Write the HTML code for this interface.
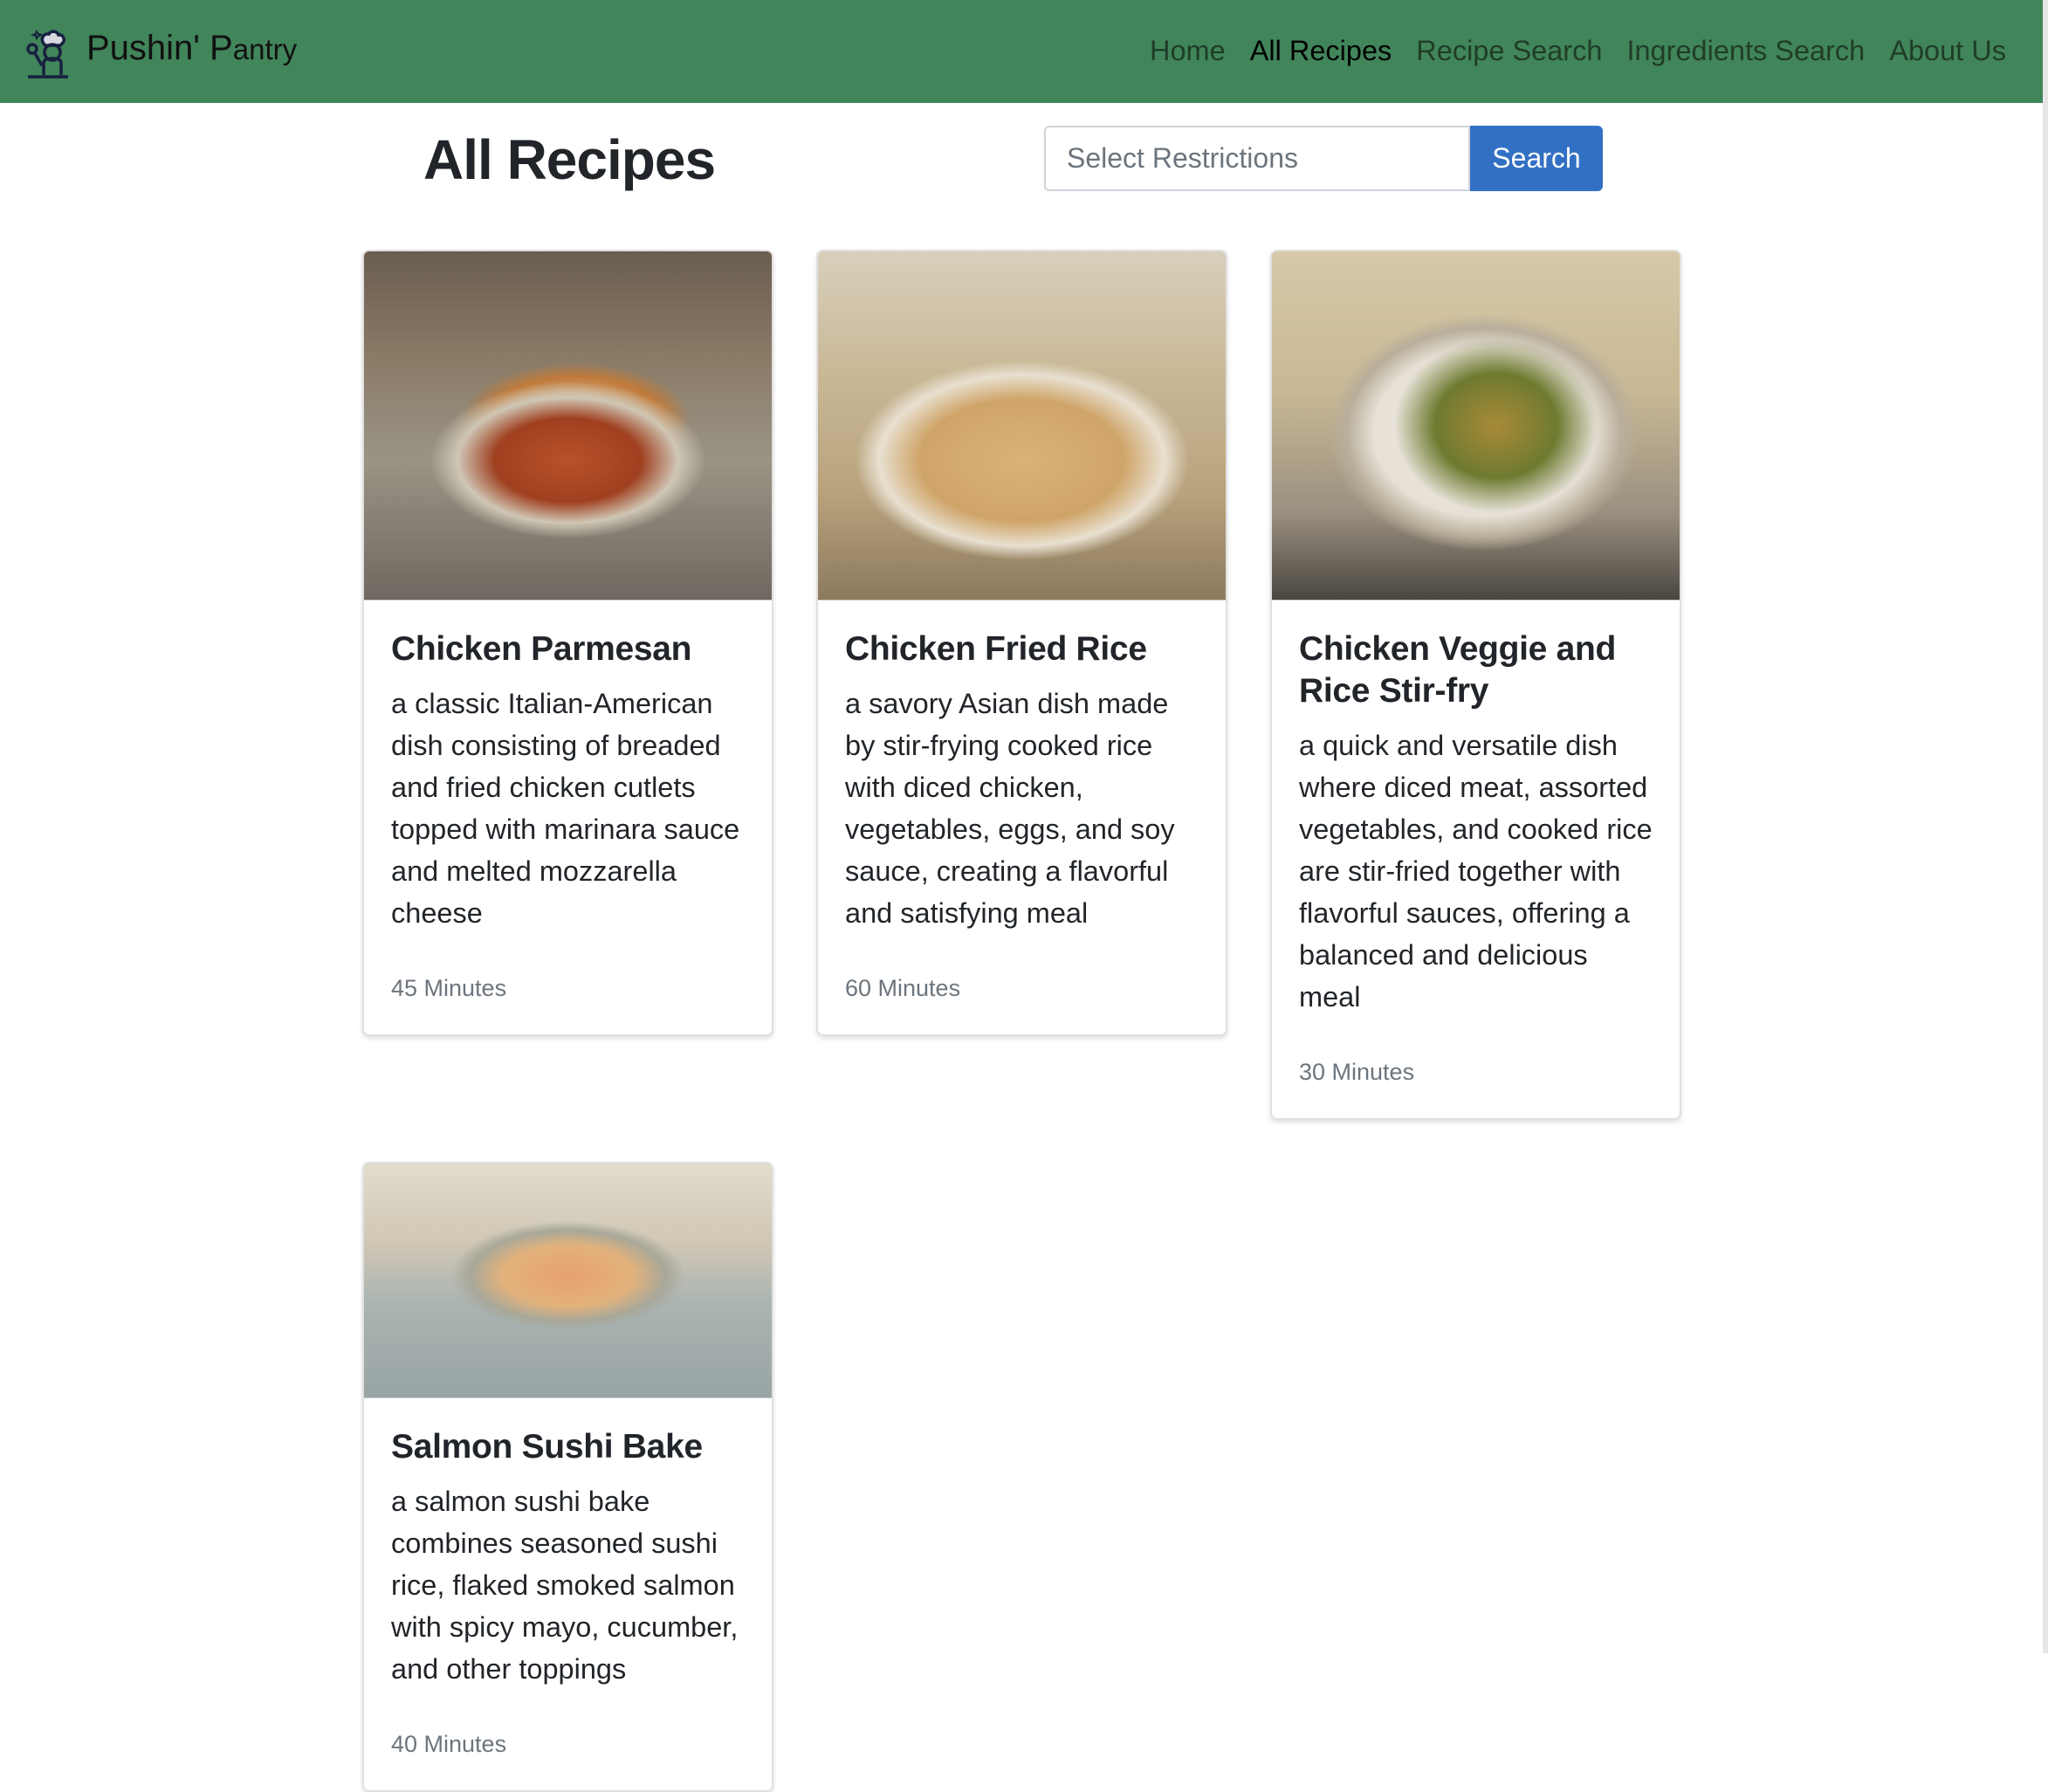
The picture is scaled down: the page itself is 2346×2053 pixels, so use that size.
<!DOCTYPE html>
<html><head><meta charset="utf-8"><style>
*{box-sizing:border-box;margin:0;padding:0}
body{width:2346px;height:1894px;background:#fff;font-family:"Liberation Sans",Arial,sans-serif;color:#212529;position:relative;overflow:hidden}
.strip{position:absolute;left:2340px;top:0;width:6px;height:1894px;background:#e6e6e6}
.nav{position:absolute;left:0;top:0;width:2340px;height:118px;background:#41855a}
.brand{position:absolute;left:99px;top:33px;font-size:40px;color:#111}
.brand small{font-size:33px}
.links{position:absolute;top:40px;left:1317px;font-size:32.5px;color:#1f3d28;white-space:nowrap}
.links span{margin-right:28px}
.links .act{color:#000}
h1{position:absolute;left:485px;top:146px;font-size:64px;font-weight:bold;letter-spacing:-1px}
.inp{position:absolute;left:1196px;top:144px;width:488px;height:75px;border:2px solid #ced4da;border-radius:6px 0 0 6px;font-size:32px;color:#6c757d;padding:17px 24px}
.btn{position:absolute;left:1684px;top:144px;width:152px;height:75px;background:#3270c4;border-radius:0 6px 6px 0;color:#fff;font-size:32px;text-align:center;line-height:75px}
.card{position:absolute;width:471px;border:2px solid #e0e0e0;border-radius:8px;background:#fff;box-shadow:0 3px 6px rgba(0,0,0,.12);overflow:hidden}
.img{height:400px;border-bottom:1px solid #ccc}
.body{padding:0 31px 37px 31px}
.t{font-size:39px;font-weight:bold;line-height:48px;margin-top:32px;margin-bottom:14px;letter-spacing:-0.3px}
.d{font-size:32.5px;line-height:48px;white-space:nowrap}
.m{font-size:27px;color:#6c757d;margin-top:47px}
</style></head><body>
<div class="strip"></div>
<div class="nav">
<svg style="position:absolute;left:28px;top:28px" width="56" height="64" viewBox="0 0 56 64" fill="none" stroke="#172040" stroke-width="3.5">
<path d="M22 22c-4-6 0-12 6-11 2-4 9-4 11 1 5-1 8 5 5 9l-3 3H24z" fill="#d8d8e0"/>
<circle cx="32" cy="32" r="9"/>
<path d="M22 58V44c0-4 4-5 10-5s10 1 10 5v14"/>
<circle cx="9" cy="28" r="5"/><path d="M12 33l8 14"/>
<path d="M4 60h46"/><path d="M14 8l2 3 3 1-3 1-2 3-1-3-3-1 3-1z" stroke-width="2"/>
</svg>
<div class="brand">Pushin' P<small>antry</small></div>
<div class="links"><span>Home</span><span class="act">All Recipes</span><span>Recipe Search</span><span>Ingredients Search</span><span style="margin:0">About Us</span></div>
</div>
<h1>All Recipes</h1>
<div class="inp">Select Restrictions</div>
<div class="btn">Search</div>

<div class="card" style="left:415px;top:286px">
<div class="img" style="background:radial-gradient(ellipse 45% 30% at 50% 60%,#b8512a 0,#a04020 40%,#cfc6b4 60%,transparent 75%),radial-gradient(ellipse 35% 20% at 52% 48%,#e8dcc0 0,#c07a3a 60%,transparent 80%),linear-gradient(180deg,#6a5e50 0,#8a7a66 30%,#9a9486 60%,#6e6860 100%)"></div>
<div class="body"><div class="t">Chicken Parmesan</div>
<div class="d">a classic Italian-American<br>dish consisting of breaded<br>and fried chicken cutlets<br>topped with marinara sauce<br>and melted mozzarella<br>cheese</div>
<div class="m">45 Minutes</div></div></div>

<div class="card" style="left:935px;top:286px">
<div class="img" style="background:radial-gradient(ellipse 50% 35% at 50% 60%,#d9b27a 0,#cfa468 50%,#e8e0d0 70%,transparent 82%),linear-gradient(180deg,#d8d0bc 0,#c9b896 35%,#b8a27c 70%,#8c7a5e 100%)"></div>
<div class="body"><div class="t">Chicken Fried Rice</div>
<div class="d">a savory Asian dish made<br>by stir-frying cooked rice<br>with diced chicken,<br>vegetables, eggs, and soy<br>sauce, creating a flavorful<br>and satisfying meal</div>
<div class="m">60 Minutes</div></div></div>

<div class="card" style="left:1455px;top:286px">
<div class="img" style="background:radial-gradient(ellipse 25% 25% at 55% 50%,#a88a38 0,#6e7a30 60%,transparent 100%),radial-gradient(ellipse 45% 40% at 52% 52%,#f0ece4 0,#e6e0d6 60%,#b8ae9a 75%,transparent 85%),linear-gradient(180deg,#d6c8a8 0,#c8b894 40%,#9a9080 75%,#4a4640 100%)"></div>
<div class="body"><div class="t">Chicken Veggie and<br>Rice Stir-fry</div>
<div class="d">a quick and versatile dish<br>where diced meat, assorted<br>vegetables, and cooked rice<br>are stir-fried together with<br>flavorful sauces, offering a<br>balanced and delicious<br>meal</div>
<div class="m">30 Minutes</div></div></div>

<div class="card" style="left:415px;top:1331px">
<div class="img" style="height:269px;background:radial-gradient(ellipse 32% 26% at 50% 48%,#e8a070 0,#e2b27c 50%,#a8a89a 75%,transparent 90%),linear-gradient(180deg,#e4dccc 0,#cfc6b4 35%,#aab4b2 60%,#98a4a4 100%)"></div>
<div class="body"><div class="t">Salmon Sushi Bake</div>
<div class="d">a salmon sushi bake<br>combines seasoned sushi<br>rice, flaked smoked salmon<br>with spicy mayo, cucumber,<br>and other toppings</div>
<div class="m">40 Minutes</div></div></div>
</body></html>
